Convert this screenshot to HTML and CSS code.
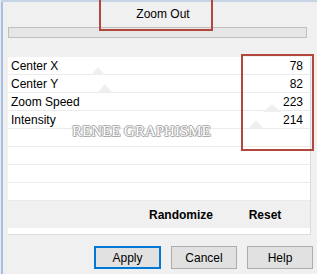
FILE: index.html
```html
<!DOCTYPE html>
<html lang="en">

<head>
    <meta charset="UTF-8">
    <title>Zoom Out</title>
    <link rel="stylesheet" href="styles.css">
</head>

<body>
    <div class="dialog">
        <div class="topstrip"></div>

        <div class="preset">Zoom Out</div>
        <div class="track"></div>

        <div class="panel">
            <div class="row"><span>Center X</span><span class="val">78</span></div>
            <div class="row"><span>Center Y</span><span class="val">82</span></div>
            <div class="row"><span>Zoom Speed</span><span class="val">223</span></div>
            <div class="row"><span>Intensity</span><span class="val">214</span></div>
            <div class="row"></div>
            <div class="row"></div>
            <div class="row"></div>
            <div class="row"></div>

            <div class="actions">
                <span class="act act-rand">Randomize</span>
                <span class="act act-reset">Reset</span>
            </div>
        </div>

        <div class="buttons">
            <button class="btn btn-default">Apply</button>
            <button class="btn">Cancel</button>
            <button class="btn">Help</button>
        </div>

        <!-- watermark + annotations laid over the dialog -->
        <span class="tri tri-1"></span>
        <span class="tri tri-2"></span>
        <span class="tri tri-3"></span>
        <span class="tri tri-4"></span>
        <div class="mark">RENEE GRAPHISME</div>
        <div class="redbox redbox-top"></div>
        <div class="redbox redbox-vals"></div>
    </div>
</body>

</html>
```

FILE: styles.css
```css
html,
body {
    margin: 0;
    padding: 0;
}

body {
    width: 317px;
    height: 274px;
    overflow: hidden;
    background-color: #f0f0f0;
    font-family: "Liberation Sans", Arial, sans-serif;
    font-size: 12px;
    color: #000;
}

.dialog {
    position: relative;
    height: 274px;
    box-sizing: border-box;
    border-left: 1px solid #e4ebf4;
    box-shadow: inset 2px 0 0 #a9bfdc;
}

.topstrip {
    height: 2px;
    background-color: #c6d3e5;
}

.preset {
    height: 25px;
    line-height: 24px;
    text-align: center;
    padding-left: 8px;
}

.track {
    margin: 0 10px 0 7px;
    height: 9px;
    background-color: #e6e6e6;
    border: 1px solid #bfbfbf;
}

.panel {
    margin: 19px 6px 0 7px;
    background-color: #fff;
    border-right: 1px solid #dcdcdc;
    border-bottom: 1px solid #dcdcdc;
    padding-bottom: 6px;
}

.row {
    height: 18px;
    box-sizing: border-box;
    border-bottom: 1px solid #ebebeb;
    display: flex;
    align-items: center;
    justify-content: space-between;
    padding: 0 7px 0 3px;
}

.val {
    text-align: right;
}

.actions {
    height: 27px;
    background-color: #f0f0f0;
    display: flex;
    align-items: center;
    justify-content: flex-end;
    padding-right: 11px;
    font-weight: bold;
}

.act {
    display: inline-block;
    text-align: center;
}

.act-rand {
    width: 82px;
}

.act-reset {
    width: 68px;
    margin-left: 9px;
}

.buttons {
    display: flex;
    justify-content: flex-end;
    gap: 10px;
    margin-top: 11px;
    padding-right: 4px;
}

.btn {
    width: 66px;
    height: 23px;
    box-sizing: border-box;
    background-color: #e1e1e1;
    border: 1px solid #adadad;
    font-family: "Liberation Sans", Arial, sans-serif;
    font-size: 12px;
    color: #000;
    padding: 0;
}

.btn-default {
    width: 67px;
    border: 2px solid #0078d7;
}

.mark {
    position: absolute;
    left: 71px;
    top: 123px;
    font-family: "Liberation Serif", "Times New Roman", serif;
    font-size: 15px;
    color: #fff;
    text-shadow: 1px 0 0 #a8a8a8, -1px 0 0 #a8a8a8, 0 1px 0 #a8a8a8, 0 -1px 0 #a8a8a8,
        1px 1px 0 #c8c8c8;
}

.tri {
    position: absolute;
    width: 0;
    height: 0;
    border-left: 7px solid transparent;
    border-right: 7px solid transparent;
    border-bottom: 8px solid #efefef;
}

.tri-1 { left: 90px; top: 67px; }
.tri-2 { left: 97px; top: 84px; }
.tri-3 { left: 262px; top: 104px; border-left-width: 9px; border-right-width: 9px; }
.tri-4 { left: 248px; top: 120px; }

.redbox {
    position: absolute;
    border: 2px solid #b2473d;
    box-sizing: border-box;
}

.redbox-top {
    left: 98px;
    top: -4px;
    width: 114px;
    height: 35px;
}

.redbox-vals {
    left: 240px;
    top: 54px;
    width: 73px;
    height: 97px;
}
```
